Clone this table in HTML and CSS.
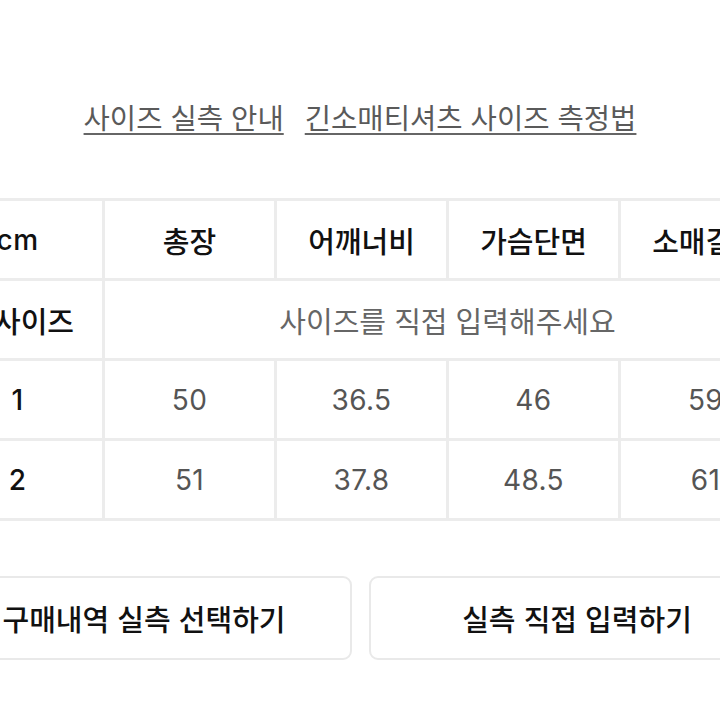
FILE: index.html
```html
<!DOCTYPE html>
<html lang="ko">
<head>
<meta charset="utf-8">
<link rel="stylesheet" href="styles.css">
</head>
<body>
<div class="page">
  <div class="links">
    <a class="link">사이즈 실측 안내</a>
    <a class="link">긴소매티셔츠 사이즈 측정법</a>
  </div>
  <table class="size-table">
    <tr class="head">
      <td class="label num">cm</td>
      <td>총장</td>
      <td>어깨너비</td>
      <td>가슴단면</td>
      <td>소매길이</td>
    </tr>
    <tr>
      <td class="label mine">사이즈</td>
      <td class="hint" colspan="4">사이즈를 직접 입력해주세요</td>
    </tr>
    <tr>
      <td class="label num">1</td>
      <td class="num">50</td>
      <td class="num">36.5</td>
      <td class="num">46</td>
      <td class="num">59</td>
    </tr>
    <tr>
      <td class="label num">2</td>
      <td class="num">51</td>
      <td class="num">37.8</td>
      <td class="num">48.5</td>
      <td class="num">61</td>
    </tr>
  </table>
  <div class="buttons">
    <button class="btn">구매내역 실측 선택하기</button>
    <button class="btn">실측 직접 입력하기</button>
  </div>
</div>
</body>
</html>
```

FILE: styles.css
```css
* { box-sizing: border-box; }
html, body { margin: 0; padding: 0; background: #fff; }
body {
  font-family: "Noto Sans CJK KR", "Noto Sans", sans-serif;
}
.page {
  width: 720px;
  height: 720px;
  overflow: hidden;
  padding-top: 98px;
}
.links {
  display: flex;
  justify-content: center;
  gap: 21px;
  height: 40px;
}
.link {
  font-size: 28.6px;
  line-height: 38px;
  color: #5a5a5a;
  text-decoration: underline;
  text-decoration-thickness: 2px;
  text-underline-offset: 4px;
  text-decoration-color: #666;
}
.size-table {
  margin-top: 60px;
  margin-left: -70px;
  border-collapse: collapse;
  table-layout: fixed;
  width: 861px;
}
.size-table td {
  width: 172px;
  height: 80px;
  border: 3px solid #ececec;
  text-align: center;
  vertical-align: middle;
  font-size: 29px;
  color: #555;
  padding: 0;
}
.size-table .head td,
.size-table td.label {
  color: #111;
  font-weight: 500;
}
.size-table td.num {
  font-family: Inter, "Noto Sans", sans-serif;
  font-size: 28px;
  font-weight: 400;
  letter-spacing: 0.4px;
}
.size-table td.label.num {
  font-weight: 500;
}
.size-table td.mine {
  text-align: right;
  padding-right: 28px;
}
.size-table td.hint {
  color: #666;
}
.buttons {
  margin-top: 55px;
  margin-left: -64px;
  display: flex;
  gap: 17px;
}
.btn {
  flex: 0 0 416px;
  height: 84px;
  background: #fff;
  border: 2px solid #e9e9e9;
  border-radius: 9px;
  font-family: "Noto Sans CJK KR", "Noto Sans", sans-serif;
  font-size: 29px;
  font-weight: 500;
  color: #111;
  padding: 0;
}
```
